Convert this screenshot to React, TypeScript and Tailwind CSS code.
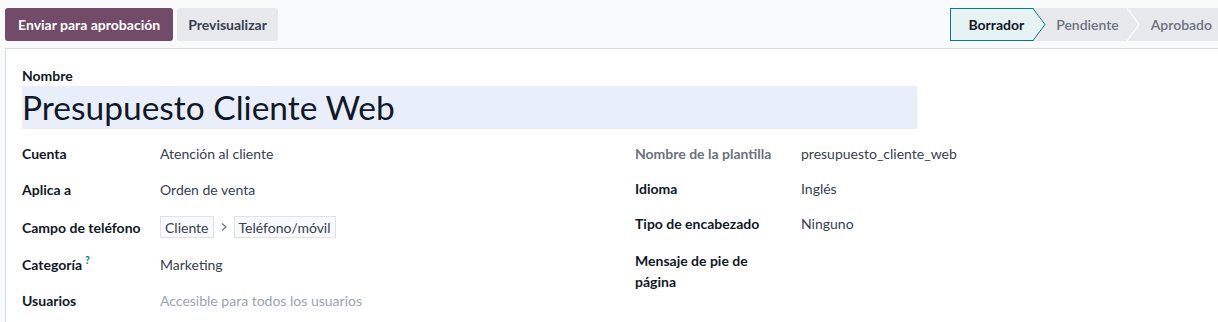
import React from 'react';

const leftRows = [
  { label: 'Cuenta', value: 'Atención al cliente', h: 'h-[36px]' },
  { label: 'Aplica a', value: 'Orden de venta', h: 'h-[37px]' },
  { label: 'Campo de teléfono', value: 'chips', h: 'h-[38px]' },
  { label: 'Categoría', value: 'Marketing', help: true, h: 'h-[36px]' },
  { label: 'Usuarios', value: 'Accesible para todos los usuarios', muted: true, h: 'h-[36px]' },
];

const rightRows = [
  { label: 'Nombre de la plantilla', value: 'presupuesto_cliente_web', readonly: true },
  { label: 'Idioma', value: 'Inglés' },
  { label: 'Tipo de encabezado', value: 'Ninguno' },
  { label: 'Mensaje de pie de página', value: '' },
];

function StatusBar() {
  return (
    <div className="flex h-[33px] text-[14px]">
      {/* current step */}
      <div className="relative flex items-center h-full pl-[17px] pr-[10px] bg-[#e6f2f3] border border-r-0 border-[#017e84] font-bold text-[#111827]">
        Borrador
        <svg className="absolute right-[-12px] top-[-1px] z-10" width="13" height="33" viewBox="0 0 13 33">
          <path d="M0 0 L12 16.5 L0 33 Z" fill="#e6f2f3" />
          <path d="M0 0.5 L12 16.5 L0 32.5" fill="none" stroke="#017e84" strokeWidth="1" />
        </svg>
      </div>
      <div className="relative flex items-center h-full pl-[22px] pr-[9px] bg-[#e7e9ed] font-semibold text-[#6b7280]">
        Pendiente
        <svg className="absolute right-[-12px] top-0 z-10" width="13" height="33" viewBox="0 0 13 33">
          <path d="M0 0 L12 16.5 L0 33 Z" fill="#e7e9ed" />
          <path d="M0 0 L12 16.5 L0 33" fill="none" stroke="#ffffff" strokeWidth="1.2" />
        </svg>
      </div>
      <div className="flex items-center h-full pl-[23px] pr-[6px] bg-[#e7e9ed] font-semibold text-[#6b7280]">
        Aprobado
      </div>
    </div>
  );
}

function Chip({ children }: { children: React.ReactNode }) {
  return (
    <span className="inline-flex items-center h-[22px] px-[4px] border border-[#dee2e6] bg-[#f8f9fa] text-[#374151]">
      {children}
    </span>
  );
}

export default function App() {
  return (
    <div className="w-[1218px] h-[322px] overflow-hidden bg-[#f9fafb] font-['Lato',sans-serif] text-[14px] text-[#374151]">
      <div className="flex items-center justify-between h-12 pl-[5px]">
        <div className="flex gap-1">
          <button className="h-[33px] px-[13px] rounded-[3px] bg-[#714b67] text-white font-bold">
            Enviar para aprobación
          </button>
          <button className="h-[33px] px-[11px] rounded-[3px] bg-[#e7e9ed] text-[#374151] font-bold">
            Previsualizar
          </button>
        </div>
        <StatusBar />
      </div>

      <div className="ml-[5px] mr-[-30px] h-[300px] border border-[#d8dadd] bg-white pl-[16px] pt-[18px]">
        <div className="font-bold text-[#111827] leading-[18px]">Nombre</div>
        <div className="w-[895px] h-[43px] mt-[1px] bg-[#e8effb] flex items-center text-[33.5px] text-[#111827] leading-none">
          Presupuesto Cliente Web
        </div>

        <div className="flex mt-[6px]">
          <div className="w-[613px] flex flex-col">
            {leftRows.map((r, i) => (
              <div key={i} className={`flex items-center ${r.h}`}>
                <div className="w-[138px] font-bold text-[#111827]">
                  {r.label}
                  {r.help && <sup className="ml-[3px] text-[#017e84] font-bold">?</sup>}
                </div>
                {r.value === 'chips' ? (
                  <div className="flex items-center gap-[5px]">
                    <Chip>Cliente</Chip>
                    <svg width="10" height="10" viewBox="0 0 10 10">
                      <path d="M3 1.5 L7 5 L3 8.5" fill="none" stroke="#6b7280" strokeWidth="1.2" />
                    </svg>
                    <Chip>Teléfono/móvil</Chip>
                  </div>
                ) : (
                  <div className={r.muted ? 'text-[#9ca3af]' : 'text-[#374151]'}>{r.value}</div>
                )}
              </div>
            ))}
          </div>
          <div className="flex flex-col">
            {rightRows.map((r, i) => (
              <div
                key={i}
                className={`flex ${i === 3 ? 'items-start pt-[9px] h-[58px]' : i === 0 ? 'items-center h-[36px]' : 'items-center h-[35px]'}`}
              >
                <div className={`w-[166px] font-bold leading-[21px] ${r.readonly ? 'text-[#6b7280]' : 'text-[#111827]'}`}>
                  {i === 3 ? (
                    <>
                      Mensaje de pie de
                      <br />
                      página
                    </>
                  ) : (
                    r.label
                  )}
                </div>
                <div className="text-[#374151]">{r.value}</div>
              </div>
            ))}
          </div>
        </div>
      </div>
    </div>
  );
}
